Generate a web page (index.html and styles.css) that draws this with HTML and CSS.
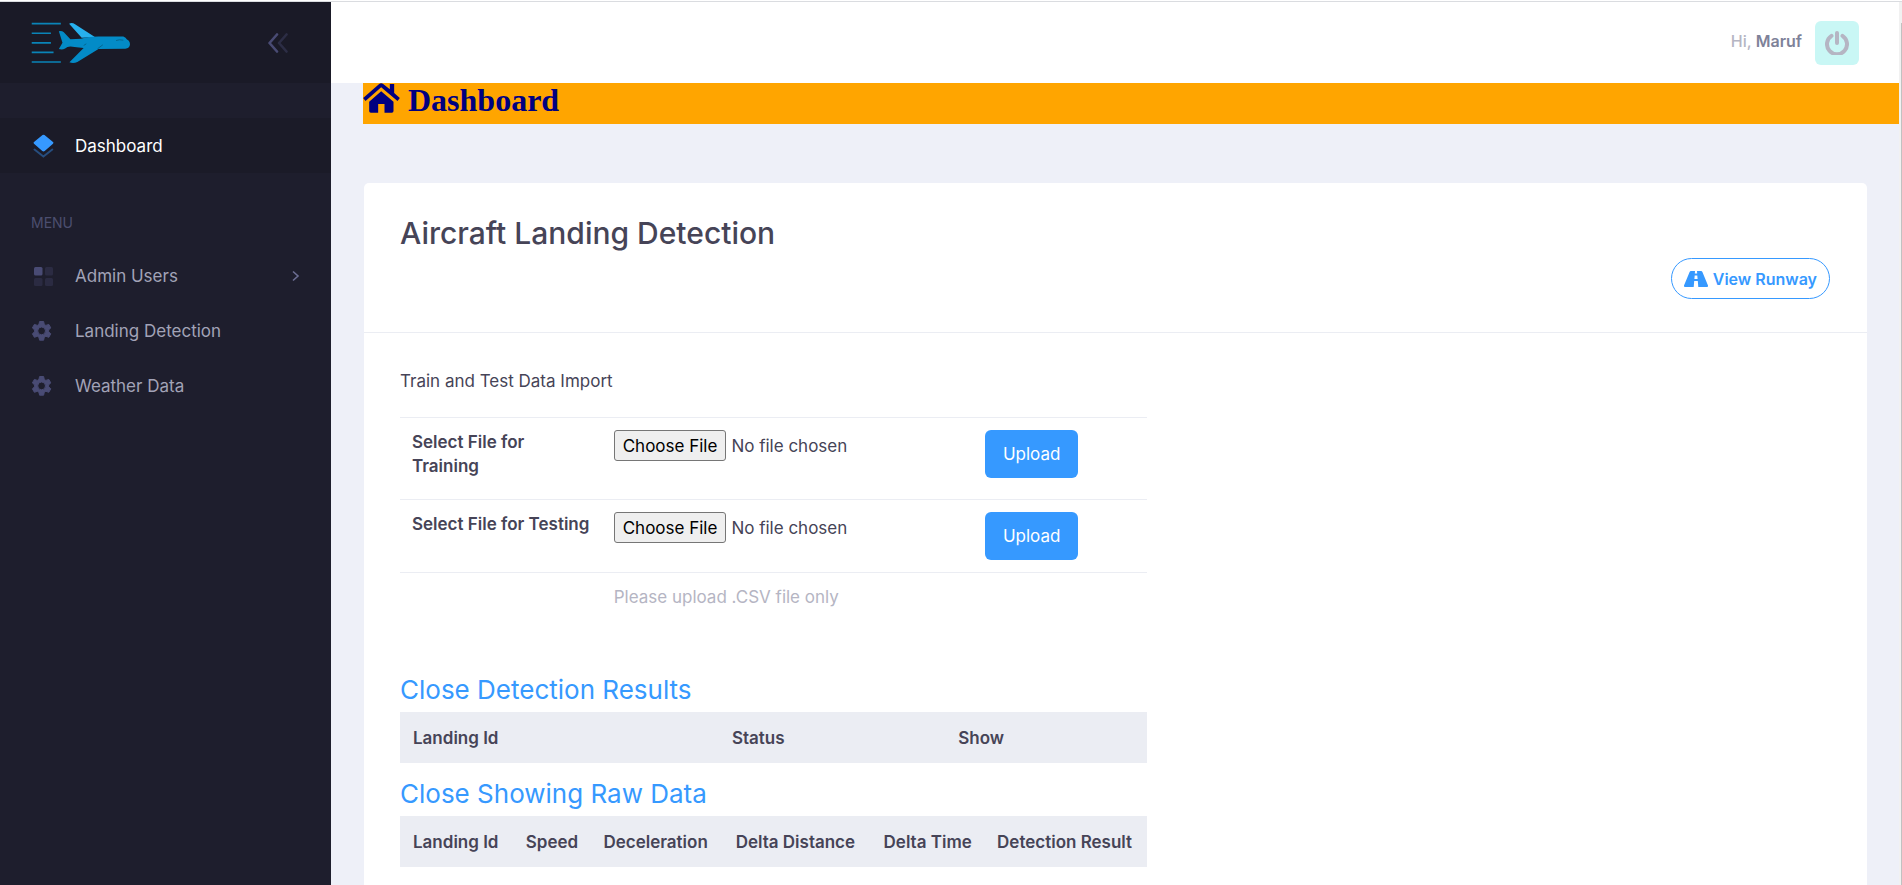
FILE: index.html
```html
<!DOCTYPE html>
<html lang="en">
<head>
<meta charset="utf-8">
<title>Dashboard</title>
<link rel="stylesheet" href="styles.css">
</head>
<body>
<div class="topline"></div>
<div class="page">
  <aside class="sidebar">
    <div class="brand">
      <a href="#" aria-label="Home"><svg class="logo" viewBox="0 0 300 124" width="100" height="41">
        <g stroke="#0a84b8" stroke-width="5"><path d="M1 5h88M1 34h58M1 63h58M1 92h66M1 121h88"/></g>
        <path fill="#27b1ee" d="M114 5q9-4 18 2l60 38-40 3z"/>
        <path fill="#038bc7" d="M83 28q9-2 15 3l20 21 32-1q22-7 52-7h76q8 3 11 9 10 5 9 16-1 11-14 12l-81 1-64 39q-12 5-24 1l43-43q-22-3-40-5-10 0-16 6-8 5-19 2l11-19z"/>
        <path stroke="#05668f" stroke-width="3" fill="none" d="M256 56q10-4 22-1M216 69l-16 12M158 71l8-5"/>
      </svg></a>
      <button class="toggle" aria-label="Collapse menu"><svg viewBox="0 0 20 20" width="20" height="20" fill="none" stroke="#494b74" stroke-width="2.600" stroke-linecap="round" stroke-linejoin="round"><path d="M9 1.500 1.500 10 9 18.500"/><path opacity=".4" d="M18.500 1.500 11 10l7.500 8.500"/></svg></button>
    </div>
    <nav class="menu">
      <a class="item active" href="#"><svg class="ico" viewBox="0 0 24 24"><path fill="#3699ff" d="M12.500 1q1-.6 2 0l8.500 7q1 .8 0 1.700l-8.300 7.300q-1.200.8-2.400 0L4 9.700q-1-.9 0-1.700z"/><path fill="none" stroke="#3699ff" stroke-opacity=".4" stroke-width="2" stroke-linecap="round" d="M4.500 15.500l8.900 7 8.900-7"/></svg><span>Dashboard</span></a>
      <h4 class="section">MENU</h4>
      <a class="item" href="#"><svg class="ico" viewBox="0 0 24 24" fill="#494b74"><rect x="4" y="3" width="8.500" height="8.500" rx="1.500"/><g opacity=".3"><rect x="15" y="3" width="8" height="8.500" rx="1.500"/><rect x="4" y="14" width="8.500" height="8" rx="1.500"/><rect x="15" y="14" width="8" height="8" rx="1.500"/></g></svg><span>Admin Users</span><svg class="arrow" viewBox="0 0 8 12" width="8" height="12" fill="none" stroke="#6c6e93" stroke-width="1.600"><path d="M1 1.500 6 6l-5 4.500"/></svg></a>
      <a class="item" href="#"><svg class="ico" viewBox="0 0 24 24"><use href="#gear"/></svg><span>Landing Detection</span></a>
      <a class="item" href="#"><svg class="ico" viewBox="0 0 24 24"><defs><path id="gear" fill="#494b74" stroke="#494b74" stroke-linejoin="round" fill-rule="evenodd" d="M9.600 2.500h4l.7 3 1.600.9 2.900-1 2 3.500-2.200 2v1.900l2.200 2-2 3.500-2.900-1-1.600.9-.7 3h-4l-.7-3-1.600-.9-2.900 1-2-3.500 2.200-2v-1.900l-2.200-2 2-3.500 2.900 1 1.600-.9zM11.600 8a3.900 3.900 0 1 0 0 7.800 3.900 3.900 0 0 0 0-7.800z"/></defs><use href="#gear"/></svg><span>Weather Data</span></a>
    </nav>
  </aside>
  <div class="wrapper">
    <header class="header">
      <span class="greet">Hi, <b>Maruf</b></span>
      <button class="power" aria-label="Sign out"><svg viewBox="0 0 24 24" width="24" height="24" fill="none" stroke="#b5b5c3" stroke-width="4"><path stroke-linecap="round" d="M12 2v10"/><path stroke-linecap="round" d="M6.500 4.800a10 10 0 1 0 11 0"/></svg></button>
    </header>
    <main class="content">
      <h1 class="banner"><svg viewBox="0 0 110 90" width="37" height="30" fill="#000080"><path d="M48 3q6-5 12 0l20 16V3h13v27l17 15-7 9-49-41L7 54l-7-9z"/><path d="M54 25l37 31v28q0 5-5 5H64V63H45v26H23q-5 0-5-5V56z"/></svg><span>Dashboard</span></h1>
      <section class="card">
        <div class="card-head">
          <h2>Aircraft Landing Detection</h2>
          <a class="pill" href="#"><svg viewBox="0 0 24 16" width="24" height="16"><path fill="#3699ff" d="M7 0h10q1 0 1.400 1L24 14.500q.4 1.500-1 1.500H1q-1.400 0-1-1.500L5.600 1Q6 0 7 0z"/><path fill="#fff" d="M11 0h2l.2 2.500h-2.400zM10.700 4.500h2.600l.3 3.500h-3.200zM10.200 10h3.600l.5 6H9.700z"/></svg>View Runway</a>
        </div>
        <div class="card-body">
          <div class="col">
            <p class="intro">Train and Test Data Import</p>
            <table class="form">
              <colgroup><col class="f1"><col class="f2"><col class="f3"></colgroup>
              <tr><td><label for="train">Select File for Training</label></td><td><input type="file" id="train"></td><td><button class="upload">Upload</button></td></tr>
              <tr><td><label for="test">Select File for Testing</label></td><td><input type="file" id="test"></td><td><button class="upload">Upload</button></td></tr>
              <tr><td></td><td class="hint">Please upload .CSV file only</td><td></td></tr>
            </table>
            <h3 class="first"><a href="#">Close Detection Results</a></h3>
            <table class="data">
              <colgroup><col class="a1"><col class="a2"><col class="a3"></colgroup>
              <thead><tr><th>Landing Id</th><th>Status</th><th>Show</th></tr></thead>
            </table>
            <h3><a href="#">Close Showing Raw Data</a></h3>
            <table class="data">
              <colgroup><col class="b1"><col class="b2"><col class="b3"><col class="b4"><col class="b5"><col class="b6"></colgroup>
              <thead><tr><th>Landing Id</th><th>Speed</th><th>Deceleration</th><th>Delta Distance</th><th>Delta Time</th><th>Detection Result</th></tr></thead>
            </table>
          </div>
        </div>
      </section>
    </main>
  </div>
  <div class="scroll"><i></i></div>
</div>
</body>
</html>
```
FILE: styles.css
```css
* { box-sizing: border-box; }
body {
  margin: 0;
  height: 100vh;
  overflow: hidden;
  display: flex;
  flex-direction: column;
  background: #eef0f8;
  color: #464457;
  font: 400 17px/24px Inter, "Open Sans", sans-serif;
}
h1, h2, h3, h4, p { margin: 0; font-weight: 400; }
a { color: inherit; text-decoration: none; }
button { font: inherit; border: 0; padding: 0; background: none; }
svg { display: block; flex: none; }

.topline { flex: none; height: 2px; background: #fff; border-bottom: 1px solid #dadce0; }
.page { flex: 1; display: flex; min-height: 0; }

.sidebar { flex: none; width: 331px; background: #1e1e2d; color: #a2a3b7; }
.brand {
  height: 81px;
  padding: 0 43px 0 31px;
  display: flex;
  align-items: center;
  justify-content: space-between;
  background: #1a1a27;
}
.menu { padding-top: 35px; }
.item { display: flex; align-items: center; height: 55px; padding: 0 31px 0 30px; }
.item span { flex: 1; }
.item.active { background: #1b1b28; color: #fff; }
.ico { width: 24px; height: 24px; margin-right: 21px; }
.section { height: 50px; margin-top: 25px; padding: 0 31px; font-size: 14px; line-height: 50px; color: #4c4e6f; }

.wrapper { flex: 1; min-width: 0; display: flex; flex-direction: column; }
.header {
  flex: none;
  height: 81px;
  padding-right: 40px;
  display: flex;
  align-items: center;
  justify-content: flex-end;
  gap: 13px;
  background: #fff;
}
.greet { padding-bottom: 3px; font-size: 16px; font-weight: 500; color: #b5b5c3; }
.greet b { font-weight: 600; color: #7e8299; }
.power { width: 44px; height: 44px; border-radius: 6px; background: #c9f7f5; display: grid; place-items: center; }

.content { flex: 1; min-height: 0; padding-left: 32px; display: flex; flex-direction: column; }
.banner {
  flex: none;
  height: 41px;
  display: flex;
  gap: 8px;
  background: orange;
  color: #000080;
  font: 700 32px/34px "Liberation Serif", serif;
}
.card { flex: 1 0 auto; margin: 59px 32px 0 1px; border-radius: 5px 5px 0 0; background: #fff; }
.card-head { padding: 28px 37px 33px 36px; display: flex; flex-direction: column; gap: 3px; border-bottom: 1px solid #ebedf3; }
.card-head h2 { font-size: 30px; line-height: 44px; font-weight: 500; }
.pill {
  align-self: flex-end;
  height: 41px;
  padding: 0 12px;
  display: flex;
  align-items: center;
  gap: 5px;
  border: 1px solid #3699ff;
  border-radius: 21px;
  color: #3699ff;
  font-size: 16px;
  font-weight: 600;
}
.card-body { padding: 36px; }
.col { width: 52.2%; }
.intro { margin-bottom: 24px; }

table { width: 100%; border-collapse: separate; border-spacing: 0; table-layout: fixed; }
.form td { padding: 12px; border-top: 1px solid #ebedf3; vertical-align: top; }
.form label { display: block; margin-bottom: 9px; font-weight: 600; }
.f1 { width: 27%; }
.f2 { width: 49.7%; }
.f3 { width: 23.3%; }
.form .hint { color: #b5b5c3; }
input[type="file"] { display: block; width: 100%; font: inherit; color: inherit; }
input[type="file"]::file-selector-button {
  height: 31px;
  padding: 0 8px;
  margin-right: 5px;
  border: 1px solid #767676;
  border-radius: 3px;
  background: #efefef;
  color: #000;
  font: inherit;
}
.upload { display: block; height: 48px; padding: 0 18px; border-radius: 6px; background: #3699ff; color: #fff; }

h3 { margin: 13px 0 4px; font-size: 26px; line-height: 36px; color: #3699ff; }
h3.first { margin-top: 51px; }
.data th { height: 51px; padding: 0 0 0 13px; text-align: left; white-space: nowrap; font-weight: 600; background: #ebedf3; }
.a1 { width: 42.7%; }
.a2 { width: 30.3%; }
.a3 { width: 27%; }
.b1 { width: 15.1%; }
.b2 { width: 10.4%; }
.b3 { width: 17.7%; }
.b4 { width: 19.8%; }
.b5 { width: 15.2%; }
.b6 { width: 21.8%; }

.scroll { flex: none; width: 3px; padding: 21px 0 0 2px; background: #f1f1f1; }
.scroll i { display: block; height: 100%; background: #c1c1c1; }
```
